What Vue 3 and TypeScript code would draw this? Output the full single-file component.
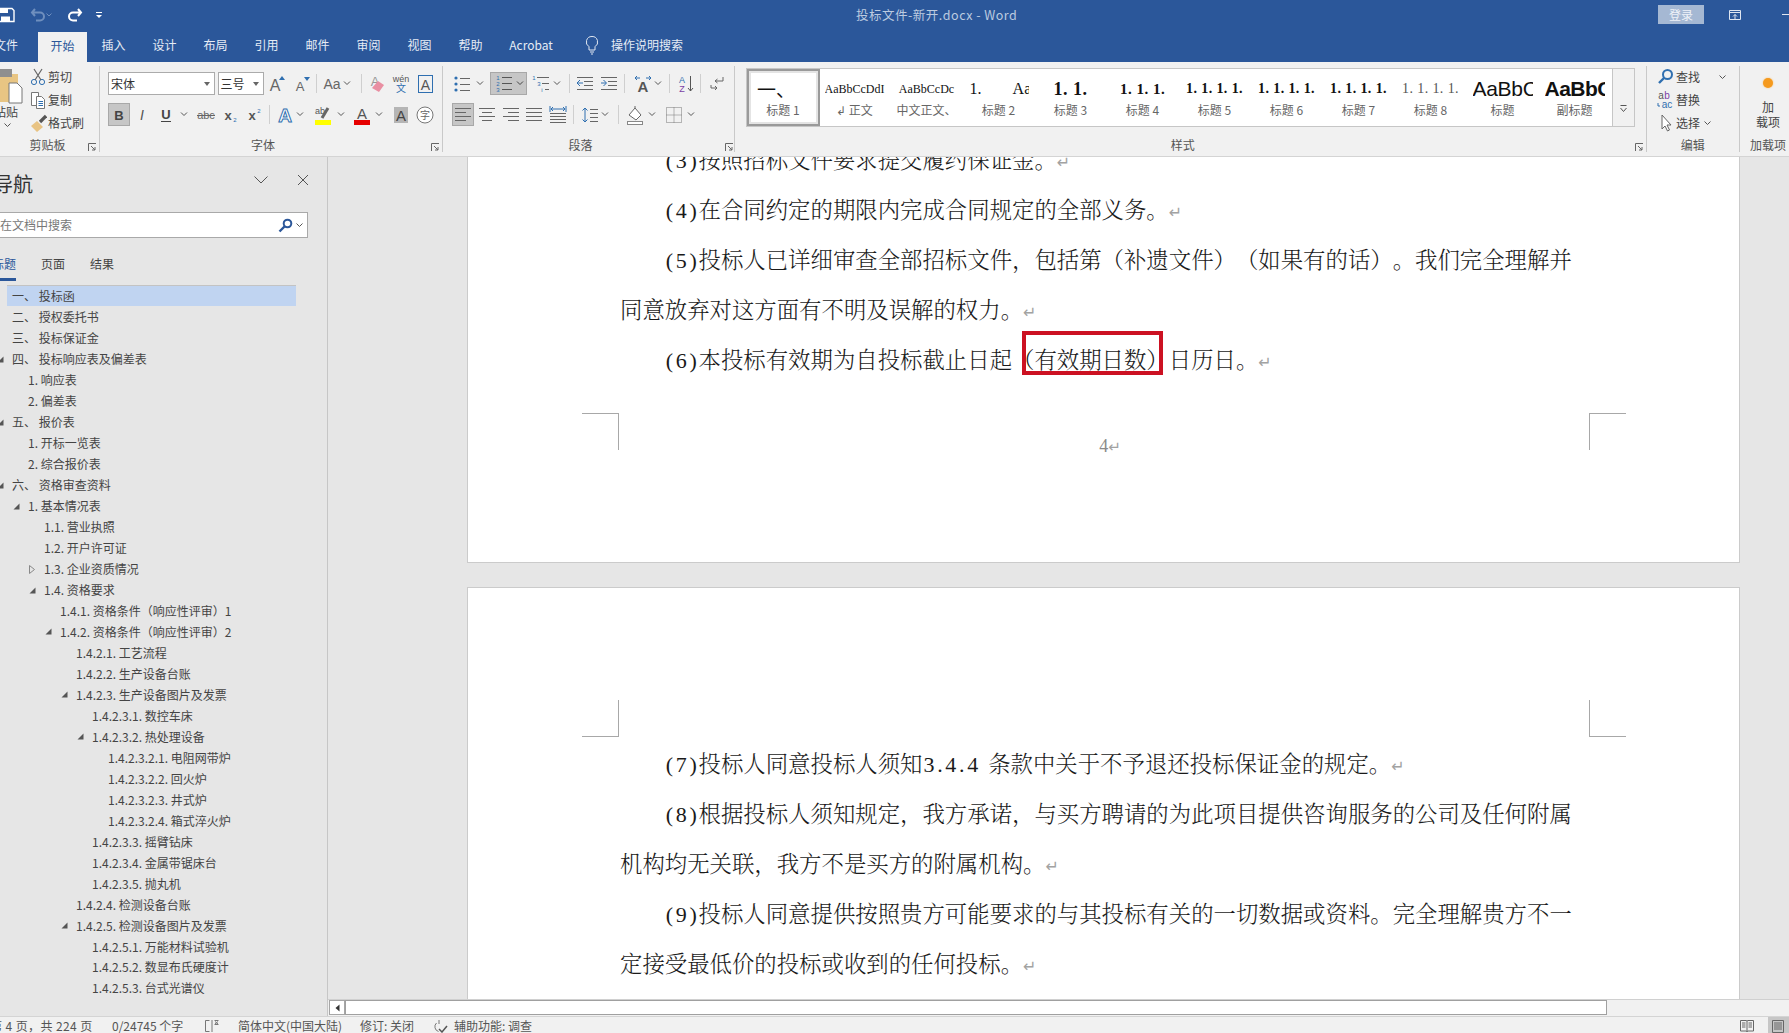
<script setup lang="ts">
type Kind = string
interface Cell { kind: Kind; w: number; ml: number; active: boolean }
type Spec = [number, Kind, number?, boolean?]

const ln = (d: string, c = '#666', w = 1) => `<path d="${d}" fill="none" stroke="${c}" stroke-width="${w}"/>`
const fl = (d: string, c = '#666') => `<path d="${d}" fill="${c}"/>`
const tx = (x: number, y: number, s: number, t: string, c = '#555', extra = '') =>
  `<text x="${x}" y="${y}" font-size="${s}" text-anchor="middle" font-family="Liberation Sans,Noto Sans CJK SC,sans-serif" fill="${c}" ${extra}>${t}</text>`
const blue = '#2f6fb0'
const lines = (rows: [number, number, number][], c = '#666') => rows.map(([x1, x2, y]) => ln(`M${x1} ${y + 0.5}H${x2}`, c)).join('')

const icons: Record<string, string> = {
  grow: tx(8, 17, 16, 'A', '#666') + fl('M12 6h6l-3-4z', blue),
  shrink: tx(8, 17, 13, 'A', '#666') + fl('M12 3h6l-3 4z', blue),
  aa: tx(10, 15, 14, 'Aa', '#666'),
  eraser: tx(8, 12, 13, 'A', '#999') + fl('M5 14l6-7 6 4-5 7z', '#e98fa2'),
  wen: tx(10, 8, 9, 'wén', '#555') + tx(10, 18, 10, '文', blue),
  boxa: `<rect x="3.5" y="1.5" width="14" height="17" fill="none" stroke="${blue}"/>` + tx(10.5, 16, 14, 'A', '#555'),
  bold: tx(10, 15, 13, 'B', '#444', 'font-weight="700"'),
  ital: tx(10, 15, 14, 'I', '#555', 'font-style="italic" font-family="Liberation Serif"'),
  under: tx(10, 14, 13, 'U', '#444', 'font-weight="700"') + ln('M5 16.5H15', '#444'),
  abc: tx(10, 14, 11, 'abc', '#666') + ln('M1 10.5H19', '#666'),
  sub: tx(8, 15, 13, 'x', '#555', 'font-weight="700"') + tx(15, 17, 6, '2', blue),
  sup: tx(8, 15, 13, 'x', '#555', 'font-weight="700"') + tx(15, 8, 6, '2', blue),
  glow: `<text x="10" y="17" font-size="19" font-weight="700" text-anchor="middle" font-family="Liberation Sans" fill="#fff" stroke="${blue}" stroke-width="1">A</text>`,
  hilite: tx(7, 9, 9, 'ab', '#555') + ln('M9 13L15 3', '#666', 3) + fl('M2 15h16v5H2z', '#ffff00'),
  color: tx(10, 14, 15, 'A', '#555') + fl('M2 15h16v5H2z', '#e60000'),
  shade: fl('M3 2h14v16H3z', '#b5b5b5') + tx(10, 16, 15, 'A', '#444'),
  circ: `<circle cx="10" cy="10" r="8" fill="#fff" stroke="#777"/>` + tx(10, 14, 10, '字', '#666'),
  bullets: `<circle cx="4" cy="4" r="1.6" fill="${blue}"/><circle cx="4" cy="10" r="1.6" fill="${blue}"/><circle cx="4" cy="16" r="1.6" fill="${blue}"/>` + lines([[8, 18, 4], [8, 18, 10], [8, 18, 16]]),
  nums: tx(4, 6, 6, '1', blue) + tx(4, 12, 6, '2', blue) + tx(4, 18, 6, '3', blue) + lines([[8, 18, 3], [8, 18, 9], [8, 18, 15]], '#555'),
  multi: tx(3, 6, 6, '1', blue) + tx(8, 12, 6, '3', blue) + tx(11, 18, 6, 'i', blue) + lines([[6, 18, 3], [11, 18, 9], [14, 18, 15]]),
  outdent: lines([[2, 18, 3], [9, 18, 7], [9, 18, 11], [2, 18, 15]]) + ln('M8 9H2M5 6L2 9l3 3', blue),
  indent: lines([[2, 18, 3], [9, 18, 7], [9, 18, 11], [2, 18, 15]]) + ln('M2 9H7M4.5 6L7.5 9l-3 3', blue),
  dir: tx(10, 18, 15, 'A', '#555', 'font-weight="700"') + ln('M2 4H7M4 2L2 4l2 2M13 4h5M16 2l2 2-2 2', blue),
  sort: tx(6, 9, 9, 'A', blue) + tx(6, 18, 9, 'Z', '#7b3fa5') + ln('M14.5 2V17M12 14l2.5 3 2.5-3', '#555'),
  ltr: ln('M15 3V7H7M9.500 5L7 7l2.500 2', '#666') + ln('M3 11v3H9M7 12l2 2-2 2', '#666'),
  aleft: lines([[2, 18, 3], [2, 13, 7], [2, 18, 11], [2, 13, 15]]),
  acenter: lines([[2, 18, 3], [5, 15, 7], [2, 18, 11], [5, 15, 15]]),
  aright: lines([[2, 18, 3], [7, 18, 7], [2, 18, 11], [7, 18, 15]]),
  ajust: lines([[2, 18, 3], [2, 18, 7], [2, 18, 11], [2, 18, 15]]),
  adist: lines([[2, 18, 8], [2, 18, 11], [2, 18, 14], [2, 18, 17]]) + ln('M3 4H17M5 2L3 4l2 2M15 2l2 2-2 2M2 1v6M18 1v6', blue),
  spacing: ln('M5 3V17M2.5 5.5L5 3l2.5 2.5M2.5 14.5L5 17l2.5-2.5', blue) + lines([[10, 18, 4], [10, 18, 8], [10, 18, 12], [10, 18, 16]]),
  bucket: fl('M4 10l6-7 6 7-5 5z', '#fff') + ln('M4 10l6-7 6 7-5 5zM10 3V1', '#666') + `<rect x="2.5" y="16.5" width="15" height="3" fill="#fff" stroke="#888"/>`,
  borders: `<path d="M2.5 2.5h15v15h-15zM10 2.5v15M2.5 10h15" fill="none" stroke="#777" stroke-dasharray="1 1"/>`,
  find: `<circle cx="11.5" cy="7.5" r="4.5" fill="none" stroke="${blue}" stroke-width="2"/>` + ln('M8 11L3 16', blue, 2.4),
  replace: tx(5, 9, 10, 'a', '#555') + tx(11, 9, 10, 'b', '#7b3fa5') + tx(11, 18, 10, 'ac', blue) + ln('M2 13v3h2', blue),
  select: `<path d="M6 2V16l3-3 2.5 5 2-1-2.5-5H15z" fill="#fff" stroke="#666"/>`,
  scissors: `<circle cx="5" cy="15" r="2.6" fill="none" stroke="${blue}"/><circle cx="13" cy="15" r="2.6" fill="none" stroke="${blue}"/>` + ln('M6 13L13 2M12 13L5 2', '#666', 1.2),
  copy: `<path d="M2.5 2.5h7v13h-7z" fill="#fff" stroke="#777"/><path d="M7.5 6.5h5l3 3v9h-8z" fill="#fff" stroke="#777"/>` + lines([[9.5, 14, 11], [9.5, 14, 13], [9.5, 14, 15]], blue),
  painter: `<path d="M2 13l6-5 6 6-6 5z" fill="#e8c383"/>` + ln('M11 9L17 3', '#555', 3.2),
  bulb: ln('M10 1.5a5.5 5.5 0 0 1 3 10.2V15H7v-3.3A5.5 5.5 0 0 1 10 1.5zM8 17h4M9 19h2', '#e3e9f2'),
}

const svgFor = (k: string) => icons[k] ?? ''

function row(x0: number, spec: Spec[]): Cell[] {
  let right = x0
  return spec.map(([c, kind, w, active]) => {
    const width = w ?? (kind === 'caret' ? 8 : kind === 'sep' ? 1 : 20)
    const left = c - width / 2
    const ml = left - right
    right = left + width
    return { kind, w: width, ml, active: !!active }
  })
}

const fontRow1 = row(263.5, [
  [277, 'grow'], [302, 'shrink'], [316.5, 'sep'], [332, 'aa'], [347, 'caret'], [361, 'sep'],
  [377, 'eraser'], [401, 'wen'], [424.5, 'boxa'],
])
const fontRow2 = row(100, [
  [118.5, 'bold', 22, true], [142, 'ital'], [166, 'under'], [184, 'caret'], [206, 'abc'], [230, 'sub'], [254, 'sup'],
  [269, 'sep'], [285, 'glow'], [300, 'caret'], [323, 'hilite'], [340.6, 'caret'], [362, 'color'], [379, 'caret'],
  [401, 'shade'], [425, 'circ'],
])
const paraRow1 = row(443, [
  [462, 'bullets'], [480, 'caret'], [508.7, 'numsel', 37, true], [541, 'multi'], [556.6, 'caret'], [570, 'sep'],
  [585, 'outdent'], [609, 'indent'], [625, 'sep'], [643, 'dir'], [658, 'caret'], [670, 'sep'], [686, 'sort'], [701, 'sep'], [718, 'ltr'],
])
const paraRow2 = row(443, [
  [462.7, 'aleft', 22, true], [487, 'acenter'], [511, 'aright'], [534.5, 'ajust'], [558.5, 'adist'], [574, 'sep'],
  [589.6, 'spacing'], [605, 'caret'], [619, 'sep'], [635, 'bucket'], [652, 'caret'], [673.6, 'borders'], [691, 'caret'],
])

const tabs = ['开始', '插入', '设计', '布局', '引用', '邮件', '审阅', '视图', '帮助', 'Acrobat']

const styles = [
  { top: '一、', label: '标题 1', cls: 'st-h1' },
  { top: 'AaBbCcDdI', label: '↲ 正文', cls: 'st-small' },
  { top: 'AaBbCcDc', label: '中文正文、', cls: 'st-small' },
  { top: '1.        Aa', label: '标题 2', cls: 'st-h2' },
  { top: '1. 1.', label: '标题 3', cls: 'st-h3' },
  { top: '1. 1. 1.', label: '标题 4', cls: 'st-h4' },
  { top: '1. 1. 1. 1.', label: '标题 5', cls: 'st-h5' },
  { top: '1. 1. 1. 1.', label: '标题 6', cls: 'st-h5' },
  { top: '1. 1. 1. 1.', label: '标题 7', cls: 'st-h5' },
  { top: '1. 1. 1. 1.', label: '标题 8', cls: 'st-h8' },
  { top: 'AaBbC', label: '标题', cls: 'st-big' },
  { top: 'AaBbC', label: '副标题', cls: 'st-bigb' },
]

// [level, text, expander: 0 none, 1 filled, 2 hollow]
const outline: [number, string, number][] = [
  [0, '一、 投标函', 0], [0, '二、 授权委托书', 0], [0, '三、 投标保证金', 0], [0, '四、 投标响应表及偏差表', 1],
  [1, '1. 响应表', 0], [1, '2. 偏差表', 0], [0, '五、 报价表', 1], [1, '1. 开标一览表', 0], [1, '2. 综合报价表', 0],
  [0, '六、 资格审查资料', 1], [1, '1. 基本情况表', 1], [2, '1.1. 营业执照', 0], [2, '1.2. 开户许可证', 0],
  [2, '1.3. 企业资质情况', 2], [2, '1.4. 资格要求', 1], [3, '1.4.1. 资格条件（响应性评审）1', 0],
  [3, '1.4.2. 资格条件（响应性评审）2', 1], [4, '1.4.2.1. 工艺流程', 0], [4, '1.4.2.2. 生产设备台账', 0],
  [4, '1.4.2.3. 生产设备图片及发票', 1], [5, '1.4.2.3.1. 数控车床', 0], [5, '1.4.2.3.2. 热处理设备', 1],
  [6, '1.4.2.3.2.1. 电阻网带炉', 0], [6, '1.4.2.3.2.2. 回火炉', 0], [6, '1.4.2.3.2.3. 井式炉', 0],
  [6, '1.4.2.3.2.4. 箱式淬火炉', 0], [5, '1.4.2.3.3. 摇臂钻床', 0], [5, '1.4.2.3.4. 金属带锯床台', 0],
  [5, '1.4.2.3.5. 抛丸机', 0], [4, '1.4.2.4. 检测设备台账', 0], [4, '1.4.2.5. 检测设备图片及发票', 1],
  [5, '1.4.2.5.1. 万能材料试验机', 0], [5, '1.4.2.5.2. 数显布氏硬度计', 0], [5, '1.4.2.5.3. 台式光谱仪', 0],
]
const rowMargin = (level: number) => `${12 + 16 * level - 25}px`
</script>

<template>
  <div class="app">
    <header class="titlebar">
      <div class="qat">
        <svg class="qi" width="16" height="16" viewBox="0 0 16 16"><path d="M-3 1.5H12l2 2V14.5H-3z" fill="none" stroke="#fff" stroke-width="1.4"/><path d="M0 2h8v4H0zM1 9.5h9v5H1z" fill="#fff"/></svg>
        <svg class="qundo" width="16" height="16" viewBox="0 0 16 16"><path d="M5 2L2 5.5 5 9M2.5 5.5H10a3.5 3.5 0 0 1 0 8H6" fill="none" stroke="#6f8fbe" stroke-width="2"/></svg>
        <svg class="qcaret" width="6" height="4" viewBox="0 0 6 4"><path d="M.5.5L3 3 5.500 .5" fill="none" stroke="#6f8fbe"/></svg>
        <svg class="qredo" width="16" height="16" viewBox="0 0 16 16"><path d="M11 2l3 3.500-3 3.500M13.500 5.500H6a3.500 3.500 0 0 0 0 8h4" fill="none" stroke="#fff" stroke-width="2"/></svg>
        <svg class="qcust" width="8" height="8" viewBox="0 0 8 8"><path d="M1 1.500H7" stroke="#fff"/><path d="M1 4h6L4 7z" fill="#fff"/></svg>
      </div>
      <div class="doc-title">投标文件-新开.docx  -  Word</div>
      <div class="login">登录</div>
      <svg class="restore" width="14" height="12" viewBox="0 0 14 12"><path d="M1.500 1.500h11v9h-11zM1.500 3.500h11M7 10V5.500M5 7.500L7 5.500l2 2" fill="none" stroke="#dfe6f1"/></svg>
      <div class="minus"></div>
    </header>

    <nav class="tabbar">
      <div class="tab-file">文件</div>
      <div v-for="(t, i) in tabs" :key="t" class="tab" :class="{ active: i === 0, wide: t === 'Acrobat' }">{{ t }}</div>
      <svg class="tell-ico" width="20" height="20" viewBox="0 0 20 20" v-html="icons.bulb"></svg>
      <div class="tell">操作说明搜索</div>
    </nav>

    <section class="ribbon">
      <div class="grp clip">
        <div class="clip-body">
          <div class="paste">
            <svg width="24" height="36" viewBox="0 0 24 36"><path d="M-4 6H18V34H-4z" fill="#e8c583"/><path d="M-2 1h14v8H-2z" fill="#8f8f8f"/><path d="M9 15h8l5 5v15H9z" fill="#fff" stroke="#777"/></svg>
            <div class="paste-t">粘贴</div>
            <svg class="paste-c" width="7" height="4" viewBox="0 0 7 4"><path d="M.5.500L3.500 3.500 6.500 .5" fill="none" stroke="#555"/></svg>
          </div>
          <div class="clip-col">
            <div class="clip-item"><svg width="18" height="20" viewBox="0 0 18 20" v-html="icons.scissors"></svg>剪切</div>
            <div class="clip-item"><svg width="18" height="20" viewBox="0 0 18 20" v-html="icons.copy"></svg>复制</div>
            <div class="clip-item"><svg width="18" height="20" viewBox="0 0 18 20" v-html="icons.painter"></svg>格式刷</div>
          </div>
        </div>
        <div class="grp-label">剪贴板</div>
        <svg class="launch" width="9" height="9" viewBox="0 0 9 9"><path d="M.5 8V.5H8M3 3l4 4M7 4v3H4" fill="none" stroke="#666"/></svg>
      </div>

      <div class="grp font">
        <div class="body">
          <div class="tr">
            <div class="combo c1">宋体<i class="tri"></i></div>
            <div class="combo c2">三号<i class="tri"></i></div>
            <template v-for="(c, i) in fontRow1" :key="i">
              <i v-if="c.kind === 'sep'" class="sep" :style="{ marginLeft: c.ml + 'px' }"></i>
              <svg v-else-if="c.kind === 'caret'" class="caret" :style="{ marginLeft: c.ml + 'px' }" width="8" height="5" viewBox="0 0 8 5"><path d="M1 .5L4 3.500 7 .5" fill="none" stroke="#555"/></svg>
              <div v-else class="btn" :style="{ marginLeft: c.ml + 'px', width: c.w + 'px' }"><svg width="20" height="20" viewBox="0 0 20 20" v-html="svgFor(c.kind)"></svg></div>
            </template>
          </div>
          <div class="tr tr2">
            <template v-for="(c, i) in fontRow2" :key="i">
              <i v-if="c.kind === 'sep'" class="sep" :style="{ marginLeft: c.ml + 'px' }"></i>
              <svg v-else-if="c.kind === 'caret'" class="caret" :style="{ marginLeft: c.ml + 'px' }" width="8" height="5" viewBox="0 0 8 5"><path d="M1 .5L4 3.500 7 .5" fill="none" stroke="#555"/></svg>
              <div v-else class="btn" :class="{ on: c.active }" :style="{ marginLeft: c.ml + 'px', width: c.w + 'px' }"><svg width="20" height="20" viewBox="0 0 20 20" v-html="svgFor(c.kind)"></svg></div>
            </template>
          </div>
        </div>
        <div class="grp-label">字体</div>
        <svg class="launch" width="9" height="9" viewBox="0 0 9 9"><path d="M.5 8V.5H8M3 3l4 4M7 4v3H4" fill="none" stroke="#666"/></svg>
      </div>

      <div class="grp para">
        <div class="body">
          <div class="tr">
            <template v-for="(c, i) in paraRow1" :key="i">
              <i v-if="c.kind === 'sep'" class="sep" :style="{ marginLeft: c.ml + 'px' }"></i>
              <svg v-else-if="c.kind === 'caret'" class="caret" :style="{ marginLeft: c.ml + 'px' }" width="8" height="5" viewBox="0 0 8 5"><path d="M1 .5L4 3.500 7 .5" fill="none" stroke="#555"/></svg>
              <div v-else-if="c.kind === 'numsel'" class="btn on numsel" :style="{ marginLeft: c.ml + 'px', width: c.w + 'px' }">
                <svg width="20" height="20" viewBox="0 0 20 20" v-html="icons.nums"></svg>
                <svg width="8" height="5" viewBox="0 0 8 5"><path d="M1 .5L4 3.500 7 .5" fill="none" stroke="#444"/></svg>
              </div>
              <div v-else class="btn" :style="{ marginLeft: c.ml + 'px', width: c.w + 'px' }"><svg width="20" height="20" viewBox="0 0 20 20" v-html="svgFor(c.kind)"></svg></div>
            </template>
          </div>
          <div class="tr tr2">
            <template v-for="(c, i) in paraRow2" :key="i">
              <i v-if="c.kind === 'sep'" class="sep" :style="{ marginLeft: c.ml + 'px' }"></i>
              <svg v-else-if="c.kind === 'caret'" class="caret" :style="{ marginLeft: c.ml + 'px' }" width="8" height="5" viewBox="0 0 8 5"><path d="M1 .5L4 3.500 7 .5" fill="none" stroke="#555"/></svg>
              <div v-else class="btn" :class="{ on: c.active }" :style="{ marginLeft: c.ml + 'px', width: c.w + 'px' }"><svg width="20" height="20" viewBox="0 0 20 20" v-html="svgFor(c.kind)"></svg></div>
            </template>
          </div>
        </div>
        <div class="grp-label">段落</div>
        <svg class="launch" width="9" height="9" viewBox="0 0 9 9"><path d="M.5 8V.5H8M3 3l4 4M7 4v3H4" fill="none" stroke="#666"/></svg>
      </div>

      <div class="grp sty">
        <div class="gallery">
          <div v-for="(s, i) in styles" :key="i" class="st" :class="{ sel: i === 0 }">
            <div class="st-top" :class="s.cls">{{ s.top }}</div>
            <div class="st-label">{{ s.label }}</div>
          </div>
          <div class="gal-more">
            <svg width="9" height="9" viewBox="0 0 9 9"><path d="M1.500 1.500H7.500" stroke="#555"/><path d="M1.500 4L4.500 7.500 7.500 4" fill="none" stroke="#555"/></svg>
          </div>
        </div>
        <div class="grp-label sty-label">样式</div>
        <svg class="launch" width="9" height="9" viewBox="0 0 9 9"><path d="M.5 8V.5H8M3 3l4 4M7 4v3H4" fill="none" stroke="#666"/></svg>
      </div>

      <div class="grp edit">
        <div class="edit-col">
          <div class="edit-item"><svg width="18" height="20" viewBox="0 0 18 20" v-html="icons.find"></svg>查找<svg class="ec ec1" width="7" height="4" viewBox="0 0 7 4"><path d="M.5.500L3.500 3.500 6.500 .5" fill="none" stroke="#555"/></svg></div>
          <div class="edit-item"><svg width="18" height="20" viewBox="0 0 18 20" v-html="icons.replace"></svg>替换</div>
          <div class="edit-item"><svg width="18" height="20" viewBox="0 0 18 20" v-html="icons.select"></svg>选择<svg class="ec" width="7" height="4" viewBox="0 0 7 4"><path d="M.5.500L3.500 3.500 6.500 .5" fill="none" stroke="#555"/></svg></div>
        </div>
        <div class="grp-label">编辑</div>
      </div>

      <div class="grp addin">
        <div class="addin-body">
          <i class="dot"></i>
          <div class="addin-t">加</div>
          <div class="addin-t">载项</div>
        </div>
        <div class="grp-label">加载项</div>
      </div>
    </section>

    <main class="main">
      <aside class="nav">
        <div class="nav-head">
          <div class="nav-title">导航</div>
          <svg class="nav-chev" width="16" height="10" viewBox="0 0 16 10"><path d="M1.500 1.500L8 8l6.500-6.500" fill="none" stroke="#555"/></svg>
          <svg class="nav-x" width="12" height="12" viewBox="0 0 12 12"><path d="M1 1l10 10M11 1L1 11" fill="none" stroke="#555"/></svg>
        </div>
        <div class="search">
          <span class="search-t">在文档中搜索</span>
          <svg width="15" height="15" viewBox="0 0 15 15"><circle cx="9.500" cy="5.500" r="3.800" fill="none" stroke="#2b579a" stroke-width="2"/><path d="M6.500 8.500L1.500 13.500" stroke="#2b579a" stroke-width="2.400"/></svg>
          <svg class="search-c" width="7" height="4" viewBox="0 0 7 4"><path d="M.5.500L3.500 3.500 6.500 .5" fill="none" stroke="#555"/></svg>
        </div>
        <div class="nav-tabs">
          <div class="nt on">标题</div>
          <div class="nt">页面</div>
          <div class="nt">结果</div>
        </div>
        <div class="tree">
          <div v-for="(o, i) in outline" :key="i" class="node" :class="{ cur: i === 0 }">
            <span class="exp" :style="{ marginLeft: rowMargin(o[0]) }">
              <svg v-if="o[2] === 1" width="7" height="7" viewBox="0 0 7 7"><path d="M6.500 .5V6.500H.5z" fill="#555"/></svg>
              <svg v-else-if="o[2] === 2" width="6" height="9" viewBox="0 0 6 9"><path d="M.5.500L5.500 4.500 .5 8.500z" fill="none" stroke="#888"/></svg>
            </span>
            <span class="node-t">{{ o[1] }}</span>
          </div>
        </div>
      </aside>

      <div class="doc-col">
        <div class="doc">
          <div class="page p1">
            <div class="body-lines first">
              <div class="ln ind"><span class="lat">(3)</span>按照招标文件要求提交履约保证金。<span class="pm">↵</span></div>
              <div class="ln ind"><span class="lat">(4)</span>在合同约定的期限内完成合同规定的全部义务。<span class="pm">↵</span></div>
              <div class="ln ind"><span class="lat">(5)</span>投标人已详细审查全部招标文件，包括第（补遗文件）（如果有的话）。我们完全理解并</div>
              <div class="ln">同意放弃对这方面有不明及误解的权力。<span class="pm">↵</span></div>
              <div class="ln ind"><span class="lat">(6)</span>本投标有效期为自投标截止日起<span class="mark-wrap">（有效期日数）<i class="redbox"></i></span>日历日。<span class="pm">↵</span></div>
            </div>
            <div class="foot">
              <i class="corner tl"></i>
              <div class="pageno">4<span class="pm small">↵</span></div>
              <i class="corner tr-c"></i>
            </div>
          </div>
          <div class="page p2">
            <div class="head">
              <i class="corner bl"></i>
              <i class="corner br"></i>
            </div>
            <div class="body-lines">
              <div class="ln ind"><span class="lat">(7)</span>投标人同意投标人须知<span class="lat">3.4.4 </span>条款中关于不予退还投标保证金的规定。<span class="pm">↵</span></div>
              <div class="ln ind"><span class="lat">(8)</span>根据投标人须知规定，我方承诺，与买方聘请的为此项目提供咨询服务的公司及任何附属</div>
              <div class="ln">机构均无关联，我方不是买方的附属机构。<span class="pm">↵</span></div>
              <div class="ln ind"><span class="lat">(9)</span>投标人同意提供按照贵方可能要求的与其投标有关的一切数据或资料。完全理解贵方不一</div>
              <div class="ln">定接受最低价的投标或收到的任何投标。<span class="pm">↵</span></div>
            </div>
          </div>
        </div>
        <div class="hscroll">
          <div class="arrow"><svg width="5" height="8" viewBox="0 0 5 8"><path d="M4.500 .5V7.500L.5 4z" fill="#333"/></svg></div>
          <div class="thumb"></div>
        </div>
      </div>
    </main>

    <footer class="status">
      <span class="s-pages">第 4 页，共 224 页</span>
      <span class="s-words">0/24745 个字</span>
      <svg class="s-book" width="16" height="14" viewBox="0 0 16 14"><path d="M5.500 1.500H1.500V12.500H5.500M8 1v12" fill="none" stroke="#777"/><path d="M10.500 1.500h4M10.500 5.500h4M11 2.500l3 2.500M14 2.500l-3 2.500" fill="none" stroke="#777"/></svg>
      <span class="s-lang">简体中文(中国大陆)</span>
      <span class="s-rev">修订: 关闭</span>
      <svg class="s-acc" width="16" height="14" viewBox="0 0 16 14"><path d="M6 1v4M3.500 4a5 5 0 0 0 2 8.500" fill="none" stroke="#777"/><path d="M6 10l3 3 5-6" fill="none" stroke="#555" stroke-width="1.500"/></svg>
      <span class="s-acct">辅助功能: 调查</span>
      <span class="s-fill"></span>
      <svg class="s-read" width="14" height="14" viewBox="0 0 14 14"><path d="M.5 1.500h6l.5 1 .5-1h6V12h-6l-.5 1-.5-1h-6zM7 2.500V12M2 4h3.500M2 6h3.500M2 8h3.500M8.500 4H12M8.500 6H12M8.500 8H12" fill="none" stroke="#666"/></svg>
      <div class="s-print"><svg width="14" height="14" viewBox="0 0 14 14"><path d="M1.500 1.500h11v12h-11zM3 4h8M3 6h8M3 8h8M3 10h8" fill="none" stroke="#666"/></svg></div>
    </footer>
  </div>
</template>

<style>
html, body { margin: 0; padding: 0; overflow: hidden; background: #f1f1f1; }
</style>

<style scoped>
.app {
  width: 1789px; height: 1033px; overflow: hidden; display: flex; flex-direction: column;
  font-family: "Noto Sans CJK SC", "Liberation Sans", sans-serif; font-size: 12px; color: #444; line-height: 16px;
  text-spacing-trim: space-all;
}
svg { display: block; flex: none; }
i { display: block; font-style: normal; }

.titlebar { height: 29px; padding-bottom: 2px; flex: none; background: #2b579a; display: flex; align-items: center; }
.qat { width: 856px; flex: none; display: flex; align-items: center; }
.qundo { margin-left: 14px; } .qcaret { margin-left: 0; } .qredo { margin-left: 15px; } .qcust { margin-left: 12px; }
.doc-title { color: #bccbe0; width: 802px; flex: none; white-space: pre; font-size: 12.5px; letter-spacing: .5px; }
.login { width: 46px; height: 19px; flex: none; line-height: 19px; text-align: center; background: #a5b8d3; color: #eef2f8; }
.restore { margin-left: 24px; }
.minus { width: 10px; height: 1px; background: #dfe6f1; margin-left: 40px; }

.tabbar { height: 31px; flex: none; background: #2b579a; display: flex; align-items: stretch; color: #e6ecf5; line-height: 28px; }
.tab-file { width: 38px; flex: none; overflow: hidden; text-indent: -6px; }
.tab { width: 51px; flex: none; text-align: center; }
.tab.active { width: 49px; margin-right: 1px; background: #f1f1f1; color: #2b579a; margin-top: 1px; line-height: 27px; }
.tab.wide { width: 70px; }
.tell-ico { margin: 4px 0 0 16px; }
.tell { margin-left: 9px; }

.ribbon { flex: none; background: #f1f1f1; border-bottom: 1px solid #d4d4d4; display: flex; padding-top: 4px; height: 90px; }
.grp { position: relative; border-right: 1px solid #c9c9c9; height: 86px; display: flex; flex-direction: column; box-sizing: border-box; flex: none; }
.grp-label { height: 12px; line-height: 10px; text-align: center; color: #555; flex: none; white-space: nowrap; }
.launch { position: absolute; right: 2px; bottom: 0; }
.body { flex: 1; padding-top: 6px; }
.tr { display: flex; align-items: center; height: 23px; }
.tr2 { margin-top: 8px; }
.btn { height: 23px; display: flex; align-items: center; justify-content: center; flex: none; }
.btn.on { background: #c6c6c6; box-shadow: inset 0 0 0 1px #a8a8a8; }
.numsel { gap: 2px; }
.sep { width: 1px; height: 19px; background: #cfcfcf; flex: none; }
.caret { flex: none; }

.clip { width: 100px; }
.clip .grp-label { padding-right: 4px; }
.clip-body { flex: 1; display: flex; }
.paste { width: 29px; flex: none; padding-top: 2px; }
.paste-t { margin-left: -6px; white-space: nowrap; line-height: 16px; height: 15px; }
.paste-c { margin: 4px 0 0 4px; }
.clip-col { margin-top: -1px; }
.clip-item { height: 23px; display: flex; align-items: center; gap: 1px; white-space: nowrap; }

.font { width: 343px; padding-left: 8px; }
.font .tr2 { margin-left: -8px; }
.font .grp-label { padding-right: 24px; }
.combo { height: 23px; box-sizing: border-box; border: 1px solid #ababab; background: #fff; display: flex; align-items: center; padding-left: 2px; position: relative; flex: none; color: #333; }
.c1 { width: 107px; }
.c2 { width: 46px; margin-left: 2.500px; }
.tri { position: absolute; right: 4px; top: 9px; width: 0; height: 0; border: 3px solid transparent; border-top: 4px solid #666; border-bottom: 0; }

.para { width: 292px; }
.para .grp-label { padding-right: 16px; }
.para .launch { right: 0; }

.sty { width: 912px; padding-left: 10.500px; }
.sty-label { margin-top: auto; padding-right: 26px; }
.gallery { height: 59px; margin-top: 2px; width: 889px; box-sizing: border-box; border: 1px solid #c6c6c6; background: #fff; display: flex; position: relative; }
.st { width: 72px; flex: none; box-sizing: border-box; padding-top: 7px; display: flex; flex-direction: column; align-items: center; overflow: hidden; }
.st.sel { width: 73px; border: 2px solid #9a9a9a; padding-top: 5px; box-shadow: inset 0 0 0 2px #e4e4e4; margin-right: -1px; }
.st-top { height: 26px; line-height: 26px; width: 60px; overflow: hidden; white-space: pre; text-align: center; color: #111; font-family: "Liberation Serif", "Noto Sans CJK SC", serif; flex: none; }
.st-label { height: 16px; line-height: 16px; white-space: nowrap; color: #666; }
.st-h1 { font-size: 19px; text-align: left; font-family: "Noto Sans CJK SC", sans-serif; padding-left: 4px; box-sizing: border-box; }
.st-small { font-size: 12px; }
.st-h2 { font-size: 16px; text-align: left; padding-left: 1px; box-sizing: border-box; }
.st-h3 { font-size: 18px; font-weight: 700; letter-spacing: .5px; }
.st-h4 { font-size: 15px; font-weight: 700; letter-spacing: .5px; }
.st-h5 { font-size: 14px; font-weight: 700; letter-spacing: .4px; }
.st-h8 { font-size: 14px; color: #555; letter-spacing: .4px; }
.st-big { font-size: 21px; font-family: "Liberation Sans", sans-serif; letter-spacing: -.3px; }
.st-bigb { font-size: 21px; font-weight: 700; font-family: "Liberation Sans", sans-serif; letter-spacing: -.5px; }
.gal-more { width: 22px; margin-left: auto; border-left: 1px solid #c6c6c6; background: #f1f1f1; display: flex; align-items: center; justify-content: center; flex: none; padding-top: 22px; box-sizing: border-box; }

.edit { width: 92.500px; }
.edit-col { flex: 1; padding-left: 9px; margin-top: -1px; }
.edit-item { height: 23px; display: flex; align-items: center; gap: 2px; white-space: nowrap; }
.ec { margin-left: 2px; }
.ec1 { margin-left: 17px; }

.addin { border-right: 0; width: 49px; padding-left: 8px; }
.addin-body { flex: 1; display: flex; flex-direction: column; align-items: center; }
.dot { width: 10px; height: 10px; border-radius: 50%; background: #f59a1e; box-shadow: 0 0 2px #f8c070; margin: 12px 0 11px; }
.addin-t { height: 15px; line-height: 15px; white-space: nowrap; }

.main { flex: 1; min-height: 0; display: flex; }
.nav { width: 327px; flex: none; background: #e6e6e6; border-right: 1px solid #c6c6c6; overflow: hidden; }
.nav-head { height: 45px; display: flex; align-items: center; }
.nav-title { margin: 8px 0 0 -7px; width: 260px; font-size: 20px; line-height: 28px; color: #333; flex: none; }
.nav-x { margin-left: 28px; }
.search { margin: 10px 0 0 -2px; width: 310px; height: 26px; box-sizing: border-box; border: 1px solid #a9a9a9; background: #fff; display: flex; align-items: center; padding-left: 1px; }
.search-t { width: 278px; flex: none; color: #777; }
.search-c { margin-left: 3px; }
.nav-tabs { display: flex; margin: 15px 0 0 -8px; gap: 25px; height: 28px; }
.nt { line-height: 22px; height: 28px; box-sizing: border-box; color: #444; }
.nt.on { color: #2b579a; border-bottom: 3px solid #2b579a; }
.tree { margin: 4px 0 0 7px; width: 289px; border-top: 1px solid #c3c3c3; }
.node { height: 20.970px; display: flex; align-items: center; white-space: nowrap; }
.node.cur { background: #c0d4f1; height: 20px; margin-bottom: .970px; }
.exp { width: 12px; margin-right: 6px; flex: none; display: flex; align-items: center; justify-content: center; }
.node-t { color: #444; }

.doc-col { flex: 1; min-width: 0; display: flex; flex-direction: column; }
.doc { flex: 1; min-height: 0; overflow: hidden; background: #e6e6e6; border-bottom: 1px solid #d0d0d0; padding-left: 139px; }
.page { width: 1273px; box-sizing: border-box; background: #fff; border: 1px solid #cbcbcb; overflow: hidden; }
.p1 { height: 406px; border-top: 0; margin-bottom: 24px; }
.body-lines { padding-left: 152px; font-family: "Noto Serif CJK SC", "Noto Sans CJK SC", serif; font-size: 22.400px; font-weight: 300; color: #1a1a1a; }
.first { margin-top: -24px; }
.ln { height: 50px; line-height: 50px; white-space: nowrap; }
.ind { padding-left: 44.800px; }
.lat { font-family: "Liberation Serif", serif; font-size: 22px; letter-spacing: 2.700px; font-weight: 400; white-space: pre; margin-left: 1px; margin-right: -1px; }
.pm { font-family: "DejaVu Sans", sans-serif; font-size: 16px; color: #a2a2a2; margin-left: 0; font-weight: 400; }
.pm.small { font-size: 15px; }
.mark-wrap { position: relative; }
.redbox { position: absolute; left: 9.800px; top: -11.500px; width: 133px; height: 36px; border: 4px solid #cc1122; }
.foot { display: flex; justify-content: space-between; margin-top: 30px; padding: 0 113px 0 114px; }
.pageno { font-family: "Liberation Serif", serif; font-size: 18px; color: #8a8a8a; margin-top: 24px; margin-left: 12px; line-height: 18px; }
.corner { width: 37px; height: 37px; box-sizing: border-box; flex: none; }
.tl { border-top: 1px solid #a8a8a8; border-right: 1px solid #a8a8a8; }
.tr-c { border-top: 1px solid #a8a8a8; border-left: 1px solid #a8a8a8; }
.bl { border-bottom: 1px solid #a8a8a8; border-right: 1px solid #a8a8a8; }
.br { border-bottom: 1px solid #a8a8a8; border-left: 1px solid #a8a8a8; }
.p2 { height: 600px; }
.head { display: flex; justify-content: space-between; margin-top: 112px; padding: 0 113px 0 114px; }

.hscroll { height: 16px; flex: none; background: #f1f1f1; display: flex; padding: 0 0 0 1px; box-sizing: border-box; }
.arrow { width: 16px; height: 15px; box-sizing: border-box; background: #fff; border: 1px solid #a6a6a6; display: flex; align-items: center; justify-content: center; flex: none; }
.thumb { width: 1262px; height: 15px; box-sizing: border-box; background: #fff; border: 1px solid #a0a0a0; flex: none; }

.status { flex: none; background: #f1f1f1; border-top: 1px solid #d4d4d4; display: flex; align-items: flex-start; overflow: hidden; color: #555; line-height: 18px; white-space: nowrap; height: 16px; }
.s-pages { margin-left: -10px; width: 122px; flex: none; letter-spacing: .4px; }
.s-book { margin: 2px 0 0 -2px; }
.s-words { width: 94px; flex: none; }
.s-lang { margin-left: 18px; width: 122px; flex: none; }
.s-rev { width: 73px; flex: none; }
.s-acc { margin-top: 2px; }
.s-acct { margin-left: 5px; }
.s-fill { flex: 1; }
.s-read { margin: 2px 14px 0 0; }
.s-print { width: 21px; height: 17px; background: #c6c6c6; padding: 2px 0 0 3px; box-sizing: border-box; flex: none; }
</style>
